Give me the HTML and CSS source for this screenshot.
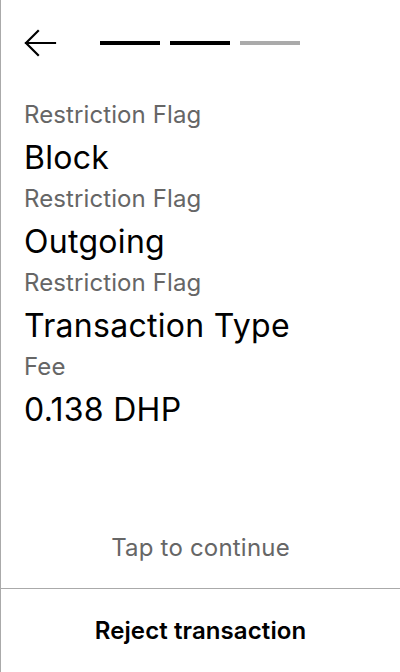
FILE: index.html
```html
<!DOCTYPE html>
<html lang="en">
<head>
<meta charset="utf-8">
<title>Confirm transaction</title>
<link rel="stylesheet" href="styles.css">
</head>
<body>
<div class="screen">
  <header class="topbar">
    <button class="back" aria-label="Back">
      <svg width="34" height="28" viewBox="0 0 34 28" fill="none" stroke="#000" stroke-width="2.2" stroke-linecap="square">
        <path d="M2 14H31"/>
        <path d="M14 2L2 14L14 26"/>
      </svg>
    </button>
    <div class="steps">
      <span class="step done"></span>
      <span class="step done"></span>
      <span class="step"></span>
    </div>
  </header>
  <main class="details">
    <div class="field"><div class="label">Restriction Flag</div><div class="value">Block</div></div>
    <div class="field"><div class="label">Restriction Flag</div><div class="value">Outgoing</div></div>
    <div class="field"><div class="label">Restriction Flag</div><div class="value">Transaction Type</div></div>
    <div class="field"><div class="label">Fee</div><div class="value">0.138 DHP</div></div>
  </main>
  <div class="hint">Tap to continue</div>
  <footer class="actions">
    <button class="reject">Reject transaction</button>
  </footer>
</div>
</body>
</html>
```
FILE: styles.css
```css
* { box-sizing: border-box; }
html, body { margin: 0; padding: 0; background: #fff; }
body { font-family: Inter, "Noto Sans", sans-serif; color: #000; }
.screen {
  width: 400px;
  height: 672px;
  border-left: 1px solid #aaa;
  display: flex;
  flex-direction: column;
}
.topbar {
  height: 86px;
  display: flex;
  align-items: center;
  padding-left: 23px;
  gap: 42px;
}
.back {
  border: 0; background: none; padding: 0; margin: 0;
  width: 34px; height: 28px; display: block;
}
.back svg { display: block; }
.steps { display: flex; gap: 10px; }
.step { width: 60px; height: 4px; background: #aaa; display: block; }
.step.done { background: #000; }
.details { padding: 14px 23px 0; flex: 1; }
.field { display: flex; flex-direction: column; }
.label { font-size: 24px; line-height: 30px; color: #666; letter-spacing: 0.1px; }
.value { font-size: 32px; line-height: 40px; color: #000; margin-top: 8px; margin-bottom: 6px; letter-spacing: 0.3px; }
.hint { text-align: center; font-size: 24px; color: #666; line-height: 30px; padding-bottom: 25px; letter-spacing: 0.2px; }
.actions { border-top: 1px solid #aaa; height: 84px; display: flex; align-items: center; justify-content: center; }
.reject { border: 0; background: none; font-family: inherit; font-size: 24px; font-weight: 600; color: #000; padding: 0; letter-spacing: 0.1px; }
```
